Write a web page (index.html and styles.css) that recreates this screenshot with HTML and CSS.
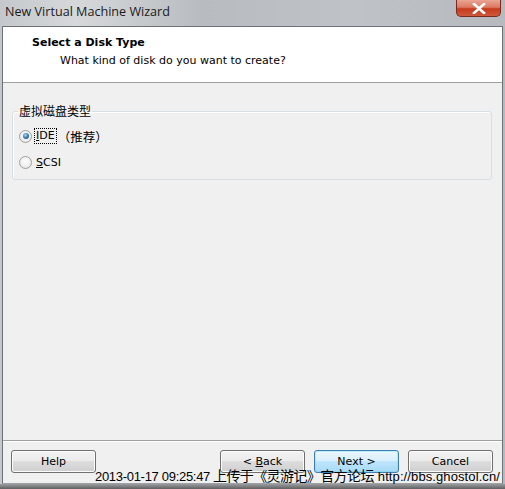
FILE: index.html
```html
<!DOCTYPE html>
<html>
<head>
<meta charset="utf-8">
<link rel="stylesheet" href="styles.css">
</head>
<body>
<div class="window">
  <div class="titlebar">
    <span class="title">New Virtual Machine Wizard</span>
    <div class="close"><svg width="14" height="11" viewBox="0 0 14 11"><path d="M2 1 L12 10 M12 1 L2 10" stroke="#fff" stroke-width="2.6" stroke-linecap="square"/></svg></div>
  </div>
  <div class="client">
    <div class="header">
      <div class="h-title">Select a Disk Type</div>
      <div class="h-sub">What kind of disk do you want to create?</div>
    </div>
    <div class="body">
      <fieldset class="group">
        <legend>虚拟磁盘类型</legend>
        <label class="radio-row"><span class="radio checked"></span><span class="focus"><u>I</u>DE</span><span class="rec">（推荐）</span></label>
        <label class="radio-row"><span class="radio"></span><span class="lbl"><u>S</u>CSI</span></label>
      </fieldset>
    </div>
    <div class="footer">
      <button class="btn">Help</button>
      <div class="spacer"></div>
      <button class="btn">&lt; <u>B</u>ack</button>
      <button class="btn default">Next &gt;</button>
      <button class="btn">Cancel</button>
    </div>
  </div>
  <div class="watermark"><span class="wm-date">2013-01-17 09:25:47</span><span class="wm-cjk">上传于《灵游记》官方论坛</span><span class="wm-url">http://bbs.ghostol.cn/</span></div>
</div>
</body>
</html>
```

FILE: styles.css
```css
* { box-sizing: border-box; }
html, body { margin: 0; padding: 0; }
body { width: 505px; height: 489px; overflow: hidden; background: #7a7d80; font-family: "DejaVu Sans", sans-serif; }
.window {
  position: relative;
  width: 505px; height: 489px;
  background: linear-gradient(90deg, #c4c8cc 0%, #d6d8da 15%, #b8bcc0 40%, #bfc3c7 70%, #b6babe 100%);
  display: flex; flex-direction: column;
  padding: 0 2px 5px 2px;
}
.window::after {
  content: ""; position: absolute; left: 0; right: 0; bottom: 0; height: 5px;
  background: linear-gradient(180deg, #9a9c9e, #5e6062);
}
.titlebar { height: 26px; display: flex; align-items: flex-start; flex: none; }
.title { font-family: "Open Sans", "Noto Sans", sans-serif; font-size: 12.6px; color: #1a1a1a; padding: 3px 0 0 3px; }
.close {
  margin-left: auto; margin-right: 2px;
  width: 45px; height: 17px;
  border: 1px solid #7a2a1c; border-top: 0;
  border-radius: 0 0 5px 5px;
  background: linear-gradient(180deg, #e9a593 0%, #dd7a63 45%, #c7391c 55%, #cf5a3c 100%);
  display: flex; align-items: center; justify-content: center;
}
.client {
  flex: 1; display: flex; flex-direction: column;
  background: #f0f0f0;
  border: 1px solid #6e7276;
  border-bottom-color: #9ea2a6;
}
.header {
  height: 56px; background: #fff; border-bottom: 1px solid #a0a0a0; flex: none;
  padding: 9px 0 0 29px;
}
.h-title { font-weight: bold; font-size: 11px; color: #000; line-height: 14px; }
.h-sub { font-size: 11px; color: #000; padding: 4px 0 0 28px; line-height: 14px; }
.body { flex: 1; padding: 21px 10px 0 9px; }
.group {
  margin: 0; padding: 9px 0 6px 6px;
  border: 1px solid #d5dfe5; border-radius: 3px;
  box-shadow: inset 1px 1px 0 #fff;
  height: 76px;
}
.group legend { font-family: "Noto Sans CJK SC", sans-serif; font-size: 12px; padding: 0 1px 0 1px; line-height: 14px; margin-left: -1px; color: #000; }
.radio-row { display: flex; align-items: center; height: 18px; margin-bottom: 8px; font-size: 11px; }
.radio-row:last-child { margin-bottom: 0; }
.radio {
  width: 13px; height: 13px; border-radius: 50%;
  border: 1px solid #a0a0a0;
  background: radial-gradient(circle at 50% 40%, #fff 0%, #ececec 65%, #d2d2d2 100%);
  margin-right: 3px; position: relative; flex: none;
}
.radio.checked::after {
  content: ""; position: absolute; left: 2.5px; top: 2.5px; width: 6px; height: 6px; border-radius: 50%;
  background: radial-gradient(circle at 40% 35%, #a7dbf7 0%, #2e75a8 55%, #1c4a72 100%);
}
.focus { outline: 1px dotted #000; outline-offset: 0; padding: 0 1px; line-height: 14px; }
.rec { font-family: "Noto Sans CJK SC", sans-serif; font-size: 12.5px; margin-left: 2px; }
.lbl { padding-left: 1px; }
.footer {
  height: 43px; flex: none; border-top: 1px solid #a0a0a0;
  display: flex; align-items: flex-start; padding: 9px 9px 0 8px; gap: 9px;
  box-shadow: inset 0 1px 0 #fff;
}
.spacer { flex: 1; }
.btn {
  width: 85px; height: 23px; margin: 0;
  font-family: "DejaVu Sans", sans-serif; font-size: 11px; color: #000;
  border: 1px solid #707070; border-radius: 3px;
  background: linear-gradient(180deg, #f2f2f2 0%, #ebebeb 49%, #dddddd 50%, #cfcfcf 100%);
  box-shadow: inset 0 0 0 1px #fcfcfc;
  padding: 0;
}
.btn.default {
  border-color: #3c7fb1;
  background: linear-gradient(180deg, #eaf6fd 0%, #d9f0fc 49%, #bee6fd 50%, #a7d9f5 100%);
  box-shadow: inset 0 0 0 1px #48d0fa44;
}
.watermark {
  position: absolute; left: 95px; top: 467px;
  display: flex; align-items: baseline; white-space: nowrap;
  line-height: 16px; color: #000;
}
.wm-date { font-family: "Liberation Sans", sans-serif; font-size: 13px; letter-spacing: -0.3px; }
.wm-cjk { font-family: "Noto Sans CJK SC", sans-serif; font-size: 14px; letter-spacing: -0.6px; margin-left: 3px; }
.wm-url { font-family: "Liberation Sans", sans-serif; font-size: 13px; letter-spacing: 0.1px; margin-left: 4px; }
```
